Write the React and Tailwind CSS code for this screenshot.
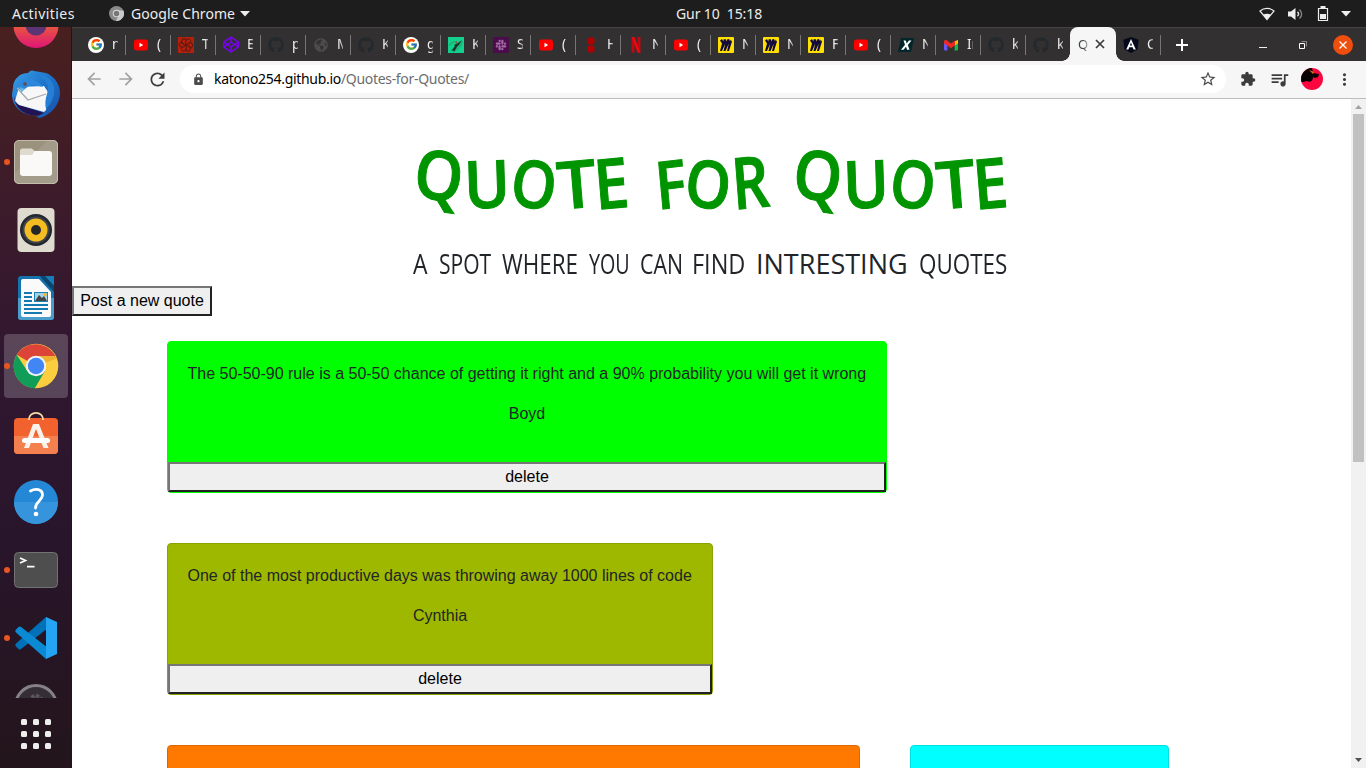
import React from "react";
import { FcGoogle } from "react-icons/fc";
import { FaGithub, FaSlack, FaCodepen, FaGlobeAmericas } from "react-icons/fa";
import {
  MdArrowBack,
  MdArrowForward,
  MdRefresh,
  MdLock,
  MdStarBorder,
  MdExtension,
  MdQueueMusic,
  MdMoreVert,
} from "react-icons/md";

/* ---------- tab favicons ---------- */
const Google = () => (
  <span className="flex h-4 w-4 items-center justify-center rounded-full bg-white">
    <FcGoogle size={13} />
  </span>
);
const YouTube = () => (
  <svg width="16" height="16" viewBox="0 0 16 16">
    <rect x="1" y="2.6" width="14" height="10.8" rx="2.6" fill="#f00" />
    <path d="M6.5 5.8v4.4L10.2 8z" fill="#fff" />
  </svg>
);
const GitHub = () => <FaGithub size={16} color="#24292e" />;
const Swirl = () => (
  <svg width="16" height="16" viewBox="0 0 16 16">
    <rect width="16" height="16" fill="#b3200b" />
    <g fill="none" stroke="#5a1a12" strokeWidth="1">
      {[0, 60, 120, 180, 240, 300].map((a) => (
        <path key={a} d="M8 8C6.500 5 8 1.800 10.500 2C13 2.200 13.500 5 11.500 6.500" transform={`rotate(${a} 8 8)`} />
      ))}
    </g>
  </svg>
);
const CodePen = () => <FaCodepen size={17} color="#7b00f5" />;
const Globe = () => (
  <span className="flex h-4 w-4 items-center justify-center">
    <FaGlobeAmericas size={14} color="#4c4c4c" />
  </span>
);
const Kite = () => (
  <svg width="16" height="16" viewBox="0 0 16 16">
    <rect width="16" height="16" fill="#14d08e" />
    <path d="M1 9C3 5 7 4 9 5M3 14C9 14 14 9 14 4" stroke="#28a86c" strokeWidth="1.200" fill="none" />
    <path d="M3 14l4-5-1-1 4-2 4-3-3 5-2 2-3 5-1-2z" fill="#17372c" />
    <circle cx="8.500" cy="5.500" r="1" fill="#8f5334" />
  </svg>
);
const Slack = () => (
  <span className="flex h-4 w-4 items-center justify-center bg-[#4a0c4b]">
    <FaSlack size={12} color="#a66aa7" />
  </span>
);
const Dots = () => (
  <svg width="16" height="16" viewBox="0 0 16 16">
    <circle cx="8" cy="4" r="3.700" fill="#b00000" />
    <circle cx="8" cy="12" r="3.700" fill="#b00000" />
  </svg>
);
const Netflix = () => (
  <svg width="16" height="16" viewBox="0 0 16 16">
    <path d="M3.500 0h3v15.600L3.500 16zM9.500 0h3v16l-3-.4z" fill="#c00812" />
    <path d="M3.500 0h3l6 16-3-.4z" fill="#e50914" />
  </svg>
);
const Miro = () => (
  <svg width="16" height="16" viewBox="0 0 16 16">
    <rect width="16" height="16" rx="1" fill="#ffe000" />
    <path
      d="M2 3.500L4 2l1.300 2.500L5.500 2.500 7.500 2l1.200 2.500L9 2.500 11 2l1.200 2.500.2-2L14 4.500 11 14H9l1.800-7.500L7.500 14h-2l1.800-7.500L4 14H2l2-7.500z"
      fill="#120a3f"
    />
  </svg>
);
const Xicon = () => (
  <svg width="16" height="16" viewBox="0 0 16 16">
    <path d="M3 1h13l-3 14H0z" fill="#00262b" />
    <path d="M5.500 3.500h2.200l1 2.900 2.200-2.900h2.600L9.800 8.100l1.700 4.600H9.100L8 9.700l-2.400 3H3l4-4.900z" fill="#fff" />
  </svg>
);
const Gmail = () => (
  <svg width="16" height="16" viewBox="0 0 16 16">
    <path d="M1 4.500L4.400 7v6.500H2a1 1 0 0 1-1-1z" fill="#6958f5" />
    <path d="M15 4.500L11.600 7v6.500H14a1 1 0 0 0 1-1z" fill="#18b84a" />
    <path d="M11.600 4.300L15 3v3.200l-3.400 2.300z" fill="#ffc400" />
    <path d="M1 5c0-2 1.700-2.500 3-1.500l4 3 4-3v4.800l-4 3-4-3-3-2z" fill="#ee2a20" />
  </svg>
);
const Angular = () => (
  <svg width="16" height="16" viewBox="0 0 16 16">
    <path d="M8 0l7.700 2.700-1.200 9.800L8 16l-6.500-3.500L.3 2.700z" fill="#06091c" />
    <path d="M8 2l4.800 10.500h-2.200l-.9-2.200H6.300l-.9 2.200H3.200zm0 3.600L6.900 8.500h2.200z" fill="#fff" />
  </svg>
);

const TABS = [
  [Google, "n"], [YouTube, "("], [Swirl, "T"], [CodePen, "E"], [GitHub, "p"], [Globe, "M"],
  [GitHub, "K"], [Google, "g"], [Kite, "K"], [Slack, "S"], [YouTube, "("], [Dots, "H"],
  [Netflix, "N"], [YouTube, "("], [Miro, "N"], [Miro, "N"], [Miro, "F"], [YouTube, "("],
  [Xicon, "N"], [Gmail, "In"], [GitHub, "k"], [GitHub, "k"],
];

function Tab({ Icon, text, line = true }) {
  return (
    <div className="flex h-full w-[45px] shrink-0 items-center">
      <div className="flex h-4 w-4 shrink-0 items-center justify-center"><Icon /></div>
      <span className="-mt-px ml-2 w-[6px] overflow-hidden whitespace-nowrap text-[13.500px] leading-[18px] text-[#f0f0f0] [mask-image:linear-gradient(to_right,#000_50%,#0008)]">
        {text}
      </span>
      <span className={line ? "ml-[7px] h-5 w-px bg-[#767475]" : "hidden"} />
    </div>
  );
}

/* ---------- dock icons ---------- */
const Firefox = () => (
  <svg width="48" height="48" viewBox="0 0 48 48">
    <defs>
      <linearGradient id="ff" x1="0" y1="0" x2="0" y2="1">
        <stop offset=".5" stopColor="#e8583e" />
        <stop offset="1" stopColor="#df1577" />
      </linearGradient>
    </defs>
    <circle cx="24" cy="23.500" r="22.500" fill="url(#ff)" />
    <circle cx="24" cy="23" r="10.500" fill="#5c3473" />
  </svg>
);
const Thunderbird = () => (
  <svg width="48" height="48" viewBox="0 0 48 48">
    <defs>
      <linearGradient id="tb" x1="0" y1="0" x2="1" y2="1">
        <stop offset="0" stopColor="#3aa0e8" />
        <stop offset=".5" stopColor="#1c70c8" />
        <stop offset="1" stopColor="#1b4fa8" />
      </linearGradient>
    </defs>
    <path d="M1 18C1 9 8 3 16 3c2-3 5-3 6-2 5 1 8 1 12 2 8 3 14 11 14 20 0 11-8 21-20 25l-4-1 4-2C12 47 0 38 0 24z" fill="url(#tb)" />
    <path d="M2 27l3 7 27 9-4 2C12 47 3 38 2 27z" fill="#231353" />
    <path d="M7 17l25-1 4 6-2 18-2 2-25-7-4-4z" fill="#f7f7f8" />
    <path d="M5 18l11 12 18-6" fill="none" stroke="#a6a6aa" strokeWidth="1.200" />
    <path d="M7 19c0-8 5-12 12-10 6 2 9 4 12 8l-10-2c-4-1-7 5-12 5z" fill="#2d87dc" />
    <path d="M18 5c12-1 21 8 17 19-2 6-2 11-1 15 7-7 10-17 7-25C38 7 28 2 18 5z" fill="#2580d5" />
    <circle cx="13" cy="14" r="1.800" fill="#684a44" />
    <path d="M8 17l1 6 4-4z" fill="#65b3e0" />
  </svg>
);
const Files = () => (
  <svg width="48" height="48" viewBox="0 0 48 48">
    <rect x="2" y="2" width="44" height="44" rx="5" fill="#9b927e" />
    <path d="M2 36L36 2h5a5 5 0 0 1 5 5v34a5 5 0 0 1-5 5H7a5 5 0 0 1-5-5z" fill="#a49c8a" />
    <rect x="2.500" y="2.500" width="43" height="43" rx="4.500" fill="none" stroke="#cbc4b6" strokeWidth=".8" />
    <path d="M8 17v-4a2.500 2.500 0 0 1 2.500-2.500h9L23 13h3v5H8z" fill="#dfdace" />
    <path d="M8 17h12l3-4h14a3 3 0 0 1 3 3v19a3 3 0 0 1-3 3H11a3 3 0 0 1-3-3z" fill="#faf9f8" />
  </svg>
);
const Rhythmbox = () => (
  <svg width="48" height="48" viewBox="0 0 48 48">
    <rect x="5.500" y="2" width="37" height="44" rx="4" fill="#dfdbcf" />
    <circle cx="24" cy="24" r="16" fill="#23272f" />
    <circle cx="24" cy="24" r="13.500" fill="#3e434b" />
    <circle cx="24" cy="24" r="11.500" fill="#f3bc20" />
    <circle cx="24" cy="24" r="5" fill="#24262a" />
  </svg>
);
const Writer = () => (
  <svg width="48" height="48" viewBox="0 0 48 48">
    <path d="M9 2h20l13 15v26a3 3 0 0 1-3 3H9a3 3 0 0 1-3-3V5a3 3 0 0 1 3-3z" fill="#1572ad" />
    <path d="M6 24h36v19a3 3 0 0 1-3 3H9a3 3 0 0 1-3-3z" fill="#4a9cca" />
    <path d="M32 2h10v10z" fill="#177cb8" />
    <path d="M32 7l10 11V12L33 2h-5z" fill="#0a4770" />
    <path d="M11 5h16l12 13v23a2 2 0 0 1-2 2H11a2 2 0 0 1-2-2V7a2 2 0 0 1 2-2z" fill="#fafafa" />
    <path d="M12 19h8M12 23h8M12 27h8M12 31h24M12 35h24M12 39h18" stroke="#147ab2" strokeWidth="2" />
    <rect x="22" y="18" width="14" height="10" fill="#1a80b8" />
    <rect x="23" y="19" width="12" height="8" fill="#a4d0e8" />
    <path d="M23 27l4-6 3 3 2-2 3 5z" fill="#444" />
    <circle cx="33" cy="20.500" r="1.500" fill="#f7b911" />
  </svg>
);
const Chrome = () => (
  <svg width="48" height="48" viewBox="0 0 48 48">
    <circle cx="24" cy="24" r="22.300" fill="#fccd3f" />
    <path d="M24 24L4.700 12.800A22.300 22.300 0 0 1 43.300 14H24z" fill="#db4437" />
    <path d="M24 14h19.300l1 2.800L30 22z" fill="#e8a52e" opacity=".7" />
    <path d="M4.700 12.800l10.600 16.200L24 34l-1.200 12.300A22.300 22.300 0 0 1 4.700 12.800z" fill="#0f9d58" />
    <path d="M22.800 46.300L33 29l-9 5-3-1z" fill="#0f9d58" />
    <circle cx="24" cy="24" r="10.200" fill="#f1f3f6" />
    <circle cx="24" cy="24" r="8.200" fill="#4285f4" />
  </svg>
);
const Software = () => (
  <svg width="48" height="48" viewBox="0 0 48 48">
    <rect x="2" y="8" width="44" height="36" rx="4" fill="#f2622e" />
    <path d="M2 26h44v14a4 4 0 0 1-4 4H6a4 4 0 0 1-4-4z" fill="#f47f4f" />
    <path d="M17 10V9a7 6.200 0 0 1 14 0v1" fill="none" stroke="#f8d9a8" strokeWidth="1.800" />
    <path d="M21 14h6l9.500 24h-5L24 19l-7 19h-5z" fill="#fbf1eb" />
    <rect x="10" y="28" width="28" height="5" rx="2.500" fill="#fff" />
  </svg>
);
const Help = () => (
  <svg width="48" height="48" viewBox="0 0 48 48">
    <circle cx="24" cy="24" r="22" fill="#2588d6" />
    <path d="M2 24h44a22 22 0 0 1-44 0z" fill="#3694dc" />
    <path d="M18.500 13c5-3 12-2 12 4 0 6-7 6-7 13" fill="none" stroke="#fff" strokeWidth="2.800" strokeLinecap="round" />
    <circle cx="24" cy="36" r="2.300" fill="#fff" />
  </svg>
);
const Terminal = () => (
  <svg width="48" height="48" viewBox="0 0 48 48">
    <rect x="2.500" y="6.500" width="43" height="35" rx="4" fill="#4e4e4e" stroke="#737373" />
    <path d="M8 12l5.500 2.500L8 17M15 20.700h7.500" fill="none" stroke="#fff" strokeWidth="1.700" />
  </svg>
);
const VSCode = () => (
  <svg width="48" height="48" viewBox="0 0 48 48">
    <path d="M34 3L4 29.500a2 2 0 0 0 0 3l2.500 2.400a2 2 0 0 0 2.600 0L36 14z" fill="#0070b8" />
    <path d="M34 45L4 18.500a2 2 0 0 1 0-3L6.500 13a2 2 0 0 1 2.600 0L36 34z" fill="#0b8ad4" />
    <path d="M34 3l11 5v32l-11 5z" fill="#24a4f2" />
  </svg>
);
const Wheel = () => (
  <svg width="48" height="48" viewBox="0 0 48 48">
    <circle cx="24" cy="24" r="20.500" fill="#352e37" stroke="#858187" strokeWidth="3" />
    <circle cx="24" cy="20" r="6.500" fill="#4a454d" stroke="#5c5761" strokeWidth="3" strokeDasharray="3 2" />
  </svg>
);

const DOCK = [
  [Firefox], [Thunderbird], [Files, true], [Rhythmbox], [Writer], [Chrome, true, true],
  [Software], [Help], [Terminal, true], [VSCode, true], [Wheel],
];

function Dock() {
  return (
    <nav className="flex w-[72px] shrink-0 flex-col border-r border-[#241119] bg-[linear-gradient(#49201f,#3a1a2c_28%,#301730_45%,#28152a_72%,#23151b)]">
      <div className="h-[671px] shrink-0 overflow-hidden">
        <div className="-mt-[35px] flex flex-col">
          {DOCK.map(([Icon, dot, active], i) => (
            <div key={i} className="flex h-[68px] w-[72px] items-center">
              <span className={dot ? "z-10 ml-1 -mr-[6px] h-[6px] w-[6px] rounded-full bg-[#e95420]" : "ml-1 -mr-[6px] h-[6px] w-[6px]"} />
              <span className={active ? "flex h-16 w-16 items-center justify-center rounded bg-white/20" : "flex h-16 w-16 items-center justify-center"}>
                <Icon />
              </span>
            </div>
          ))}
        </div>
      </div>
      <div className="ml-[21px] mt-[21px] grid w-[30px] grid-cols-3 gap-[6px]">
        {Array.from({ length: 9 }, (_, i) => (
          <span key={i} className="h-[6px] w-[6px] rounded-[1.5px] bg-[#eeeeec]" />
        ))}
      </div>
    </nav>
  );
}

function TopBar() {
  return (
    <header className="grid h-[27px] shrink-0 grid-cols-[1fr_auto_1fr] items-center bg-[#1d1d1d] text-[14px] text-[#ededed]">
      <div className="flex items-center">
        <span className="ml-3 w-[97px] tracking-[0.45px]">Activities</span>
        <svg width="15" height="15" viewBox="0 0 48 48">
          <circle cx="24" cy="24" r="24" fill="#8a8a8a" />
          <path d="M24 14h22a24 24 0 0 1-24 34l10-19z" fill="#c9c9c9" />
          <circle cx="24" cy="24" r="12" fill="#ddd" />
          <circle cx="24" cy="24" r="9" fill="#777" />
        </svg>
        <span className="ml-[7px] w-[105px] whitespace-nowrap tracking-[0.05px]">Google Chrome</span>
        <svg className="ml-1" width="10" height="6" viewBox="0 0 10 6"><path d="M0 0h10L5 5.500z" fill="#eee" /></svg>
      </div>
      <span className="w-[87px] translate-x-[36.5px] whitespace-pre text-[14px] tracking-[-0.1px]">Gur 10  15:18</span>
      <div className="flex items-center justify-end pr-[15px]">
        <svg width="16" height="14" viewBox="0 0 16 14">
          <path d="M1 4C5 .6 11 .6 15 4L8 12.500z" fill="none" stroke="#eee" strokeWidth="1.200" />
          <path d="M4 7.700c2.500-1.300 5.500-1.300 8 0L8 12.800z" fill="#eee" />
        </svg>
        <svg className="ml-[13px]" width="16" height="14" viewBox="0 0 16 14">
          <path d="M0 4.500h3L7.500 1v12L3 9.500H0z" fill="#eee" />
          <path d="M9.500 4.800c1.300 1.300 1.300 3.200 0 4.500" fill="none" stroke="#ddd" strokeWidth="1.300" />
          <path d="M11.500 2.500c2.800 2.600 2.800 6.400 0 9" fill="none" stroke="#888" strokeWidth="1.300" />
        </svg>
        <svg className="ml-[13px]" width="12" height="16" viewBox="0 0 12 16">
          <path d="M1.500 2.500h9v12h-9z" fill="none" stroke="#eee" strokeWidth="1.200" />
          <path d="M3.500 0h5v2h-5zM3 8h6v5H3z" fill="#eee" />
        </svg>
        <svg className="ml-[12px]" width="10" height="6" viewBox="0 0 10 6"><path d="M0 0h10L5 5.500z" fill="#eee" /></svg>
      </div>
    </header>
  );
}

function TabStrip() {
  return (
    <div className="flex h-[34px] shrink-0 items-center border-t border-[#454343] bg-[#333031] pl-4">
      {TABS.map(([Icon, text], i) => (
        <Tab key={i} Icon={Icon} text={text} line={i < TABS.length - 1} />
      ))}
      <div className="-ml-[16px] flex h-full shrink-0 items-end">
        <span className="h-2 w-2 shrink-0 bg-[radial-gradient(circle_at_0_0,#333031_7.500px,#f6f6f6_8px)]" />
        <div className="-mt-px flex h-[34px] w-[46px] items-center rounded-t-lg bg-[#f6f6f6] pl-2 text-[#3c4043]">
          <span className="w-[10px] overflow-hidden text-[13px] leading-4 [mask-image:linear-gradient(to_right,#000_50%,#0005)]">Q</span>
          <svg className="ml-[7px]" width="10" height="10" viewBox="0 0 10 10">
            <path d="M1 1l8 8M9 1L1 9" stroke="#3a3a3a" strokeWidth="1.700" />
          </svg>
        </div>
        <span className="h-2 w-2 shrink-0 bg-[radial-gradient(circle_at_100%_0,#333031_7.500px,#f6f6f6_8px)]" />
      </div>
      <div className="-ml-[1px] h-full"><Tab Icon={Angular} text="C" /></div>
      <svg className="ml-[8px]" width="12" height="12" viewBox="0 0 12 12">
        <path d="M6 0v12M0 6h12" stroke="#fff" strokeWidth="2" />
      </svg>
      <div className="ml-auto flex items-center pr-[13px]">
        <svg width="8" height="10" viewBox="0 0 8 10"><path d="M0 7.500h8" stroke="#eee" strokeWidth="1" /></svg>
        <svg className="ml-8" width="8" height="8" viewBox="0 0 8 8">
          <path d="M.5 2.500h5v5h-5z" fill="none" stroke="#fff" strokeWidth="1" />
          <path d="M2.500.5h5v5" fill="none" stroke="#8b8989" />
        </svg>
        <span className="ml-[26px] flex h-5 w-5 items-center justify-center rounded-full bg-[#f04e0c]">
          <svg width="8" height="8" viewBox="0 0 8 8"><path d="M.5.5l7 7M7.500.5l-7 7" stroke="#fff" strokeWidth="1.300" /></svg>
        </span>
      </div>
    </div>
  );
}

function Toolbar() {
  return (
    <div className="flex h-[38px] shrink-0 items-center border-b border-[#bdbdbd] bg-[#f6f6f6] pb-px text-[#3c3c3c]">
      <MdArrowBack className="ml-3 text-[#a2a2a2]" size={20} />
      <MdArrowForward className="ml-3 text-[#a2a2a2]" size={20} />
      <MdRefresh className="ml-[11px]" size={21} />
      <div className="ml-[12px] flex h-7 w-[1046px] items-center rounded-full bg-white pl-3 pr-[9px]">
        <MdLock className="text-[#4b4c4d]" size={13} />
        <span className="-mt-px ml-[9px] whitespace-nowrap text-[14px] tracking-[-0.31px] text-black">
          katono254.github.io<span className="text-[#6d6d6d]">/Quotes-for-Quotes/</span>
        </span>
        <MdStarBorder className="ml-auto text-[#4a4a4a]" size={18} />
      </div>
      <MdExtension className="ml-[14px]" size={16} />
      <MdQueueMusic className="ml-[13px]" size={21} />
      <svg className="ml-[11px]" width="22" height="22" viewBox="0 0 22 22">
        <circle cx="11" cy="11" r="11" fill="#fb063f" />
        <path d="M.5 14A11 11 0 0 1 11 0l1 5 6 1-1 3-3 1-2-1c0 4-3 6-6 4l-4 1z" fill="#080204" />
        <path d="M8 2l5 2-1 2z" fill="#c97c14" />
      </svg>
      <MdMoreVert className="ml-[12px]" size={19} />
    </div>
  );
}

const OUTSET = "h-[30px] border-2 border-t-[#767676] border-l-[#767676] border-b-[#212121] border-r-[#212121] bg-[#efefef] text-[16px] leading-6 text-black";

function Card({ text, author, className }) {
  return (
    <article className={"flex h-[152px] shrink-0 flex-col rounded border text-center text-[16px] leading-6 text-[#212529] " + className}>
      <div className="flex h-[120px] flex-col gap-4 whitespace-nowrap py-5 pl-[19.5px] pr-[20.5px]">
        <p>{text}</p>
        <p className="pl-px">{author}</p>
      </div>
      {text && <button className={OUTSET + " w-full"}>delete</button>}
    </article>
  );
}

/* Hand-lettered look: each capital leans a little differently. */
function QuoteWord() {
  return (
    <>
      <span className="inline-block -translate-y-[9px] rotate-[7deg] scale-y-[1.03]">Q</span>
      <span className="inline-block -rotate-2">U</span>
      <span className="inline-block rotate-[8deg] scale-x-[.93]">O</span>
      <span className="inline-block -rotate-[5deg] scale-x-[1.12]">T</span>
      <span className="inline-block -translate-y-px -rotate-[5deg] scale-y-[1.05]">E</span>
    </>
  );
}

const SUBTITLE = [
  ["A", "w-[26px]", "scale-x-[.85]"],
  ["SPOT", "w-[63px]", "scale-x-[.78]"],
  ["WHERE", "w-[87px]", "scale-x-[.83]"],
  ["YOU", "w-[51px]", "scale-x-[.73]"],
  ["CAN", "w-[52px]", "scale-x-[.79]"],
  ["FIND", "w-[64px]", "scale-x-[.87]"],
  ["INTRESTING", "w-[163px]", ""],
  ["QUOTES", "w-[88px]", "scale-x-[.83]"],
];

function Page() {
  return (
    <div className="flex min-h-0 flex-1">
      <main className="flex flex-1 flex-col overflow-hidden bg-white font-['Liberation_Sans',sans-serif]">
        <h1 className="mt-[41px] flex h-[84px] shrink-0 items-center pl-[343px] font-['Open_Sans',sans-serif] text-[66px] font-semibold leading-[84px] text-[#009400] [-webkit-text-stroke:1px_#009400]">
          <span className="block w-[240px] origin-left scale-x-[.94] whitespace-nowrap"><QuoteWord /></span>
          <span className="block w-[139px] origin-left scale-x-[.88] whitespace-nowrap">
            <span className="inline-block -rotate-[6deg]">F</span>
            <span className="inline-block rotate-[8deg]">O</span>
            <span className="inline-block -translate-y-[2px] -rotate-[5deg] scale-y-[1.08]">R</span>
          </span>
          <span className="block w-[212px] origin-left scale-x-[.94] whitespace-nowrap"><QuoteWord /></span>
        </h1>
        <p className="ml-[341px] mt-[24px] flex h-[32px] w-[594px] shrink-0 items-center self-start whitespace-nowrap font-['Open_Sans',sans-serif] text-[27px] leading-8 text-[#212529]">
          {SUBTITLE.map(([word, width, scale]) => (
            <span key={word} className={"block shrink-0 origin-left " + width}>
              <span className={"inline-block origin-left " + scale}>{word}</span>
            </span>
          ))}
        </p>
        <button className={OUTSET + " mt-[6px] w-[140px] shrink-0"}>Post a new quote</button>
        <section className="ml-[95px] mt-[25px] flex shrink-0 flex-col gap-[50px]">
          <Card
            className="w-[720px] border-[#00ff00] bg-[#00ff00]"
            text="The 50-50-90 rule is a 50-50 chance of getting it right and a 90% probability you will get it wrong"
            author="Boyd"
          />
          <Card
            className="w-[546px] border-[#8aa100] bg-[#9eb800]"
            text="One of the most productive days was throwing away 1000 lines of code"
            author="Cynthia"
          />
          <div className="flex gap-[50px]">
            <Card className="w-[693px] border-[#df6900] bg-[#ff7800]" />
            <Card className="w-[259px] border-[#00dfdf] bg-[#00ffff]" />
          </div>
        </section>
      </main>
      <aside className="flex w-[15px] shrink-0 flex-col items-center bg-[#f1f1f1]">
        <svg className="mt-[6px] shrink-0" width="7" height="4" viewBox="0 0 7 4"><path d="M0 4L3.500 0 7 4z" fill="#a3a3a3" /></svg>
        <div className="mt-[5px] h-[348px] w-[11px] shrink-0 bg-[#c1c1c1]" />
        <svg className="mb-[6px] mt-auto shrink-0" width="7" height="4" viewBox="0 0 7 4"><path d="M0 0h7L3.500 4z" fill="#505050" /></svg>
      </aside>
    </div>
  );
}

export default function App() {
  return (
    <div className="flex h-[768px] w-[1366px] flex-col overflow-hidden bg-white font-['Noto_Sans',sans-serif]">
      <TopBar />
      <div className="flex min-h-0 flex-1">
        <Dock />
        <div className="flex min-w-0 flex-1 flex-col">
          <TabStrip />
          <Toolbar />
          <Page />
        </div>
      </div>
    </div>
  );
}
